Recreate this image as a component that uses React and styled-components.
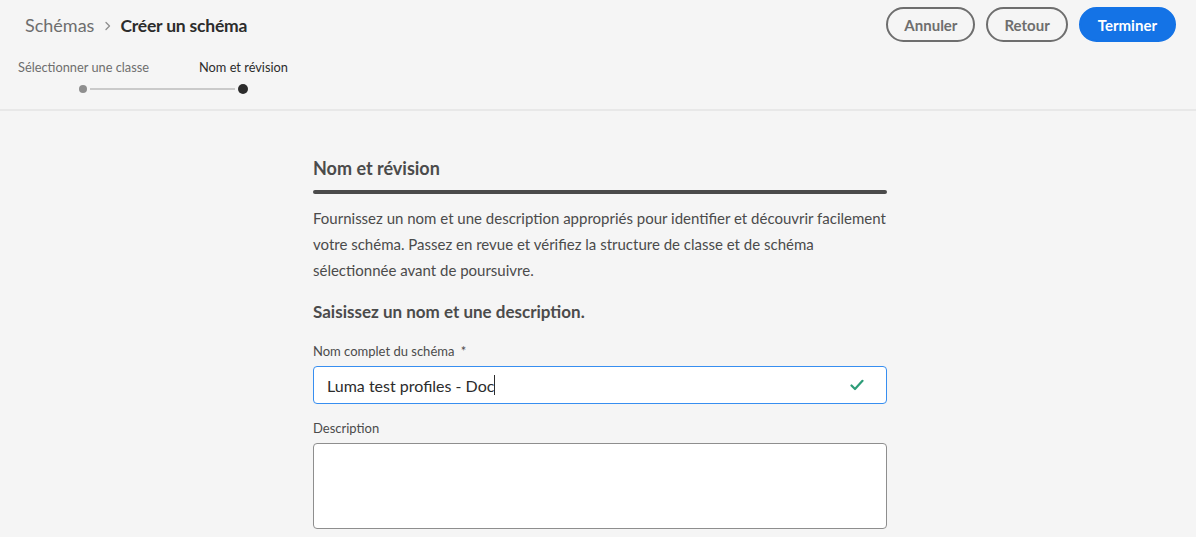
import styled, { createGlobalStyle } from "styled-components";

const GlobalStyle = createGlobalStyle`
  html, body {
    margin: 0;
    padding: 0;
    background: #f5f5f5;
    font-family: Lato, "Noto Sans", sans-serif;
    color: #4b4b4b;
  }
`;

function Stepper() {
  return (
    <Steps>
      <StepLabels>
        <StepLabel>Sélectionner une classe</StepLabel>
        <StepLabel $active>Nom et révision</StepLabel>
      </StepLabels>
      <Track>
        <Dot />
        <TrackLine />
        <Dot $active />
      </Track>
    </Steps>
  );
}

function CheckIcon() {
  return (
    <svg width="14" height="12" viewBox="0 0 14 12">
      <path d="M1.5 6.5 L5 10 L12.5 1.8" fill="none" stroke="#2d9d78" strokeWidth="2.2" strokeLinecap="round" strokeLinejoin="round" />
    </svg>
  );
}

export default function App() {
  return (
    <Page>
      <GlobalStyle />
      <Header>
        <HeaderLeft>
          <Breadcrumbs>
            <Crumb>Schémas</Crumb>
            <Chevron>
              <svg width="8" height="10" viewBox="0 0 8 10">
                <path d="M2 1.5 L5.5 5 L2 8.5" fill="none" stroke="#8e8e8e" strokeWidth="1.3" strokeLinecap="round" strokeLinejoin="round" />
              </svg>
            </Chevron>
            <CurrentCrumb>Créer un schéma</CurrentCrumb>
          </Breadcrumbs>
          <Stepper />
        </HeaderLeft>
        <Actions>
          <Button>Annuler</Button>
          <Button>Retour</Button>
          <Button $primary>Terminer</Button>
        </Actions>
      </Header>
      <Content>
        <Form>
          <SectionTitle>Nom et révision</SectionTitle>
          <TitleBar />
          <Intro>
            Fournissez un nom et une description appropriés pour identifier et découvrir facilement
            votre schéma. Passez en revue et vérifiez la structure de classe et de schéma
            sélectionnée avant de poursuivre.
          </Intro>
          <SubTitle>Saisissez un nom et une description.</SubTitle>
          <Field>
            <Label>Nom complet du schéma <Required>*</Required></Label>
            <InputWrap>
              <TextValue>Luma test profiles - Doc<Caret /></TextValue>
              <CheckIcon />
            </InputWrap>
          </Field>
          <Field $gap={15}>
            <Label>Description</Label>
            <TextArea />
          </Field>
        </Form>
      </Content>
    </Page>
  );
}

const Page = styled.div`
  width: 1196px;
  height: 537px;
  overflow: hidden;
  background: #f5f5f5;
`;

const Header = styled.header`
  display: flex;
  justify-content: space-between;
  align-items: flex-start;
  border-bottom: 2px solid #e8e8e8;
  box-sizing: border-box;
  height: 111px;
`;

const HeaderLeft = styled.div`
  display: flex;
  flex-direction: column;
  padding: 13px 0 0 18px;
`;

const Breadcrumbs = styled.div`
  display: flex;
  align-items: center;
  padding-left: 7px;
  height: 24px;
`;

const Crumb = styled.span`
  font-size: 18px;
  color: #6e6e6e;
`;

const Chevron = styled.span`
  display: flex;
  margin: 2px 8px 0 10px;
`;

const CurrentCrumb = styled.span`
  font-size: 17.5px;
  font-weight: 700;
  color: #2c2c2c;
  letter-spacing: -0.2px;
`;

const Steps = styled.div`
  display: flex;
  flex-direction: column;
  margin-top: 22px;
`;

const StepLabels = styled.div`
  display: flex;
  gap: 50px;
`;

const StepLabel = styled.span`
  font-size: 12.8px;
  color: ${(p) => (p.$active ? "#2c2c2c" : "#6e6e6e")};
`;

const Track = styled.div`
  display: flex;
  align-items: center;
  margin: 9px 0 0 61px;
  width: 169px;
`;

const Dot = styled.span`
  width: ${(p) => (p.$active ? "10px" : "8px")};
  height: ${(p) => (p.$active ? "10px" : "8px")};
  border-radius: 50%;
  background: ${(p) => (p.$active ? "#2c2c2c" : "#8e8e8e")};
  flex-shrink: 0;
`;

const TrackLine = styled.span`
  flex: 1;
  height: 2px;
  background: #cacaca;
  margin: 0 3px;
`;

const Actions = styled.div`
  display: flex;
  gap: 11px;
  padding: 7px 20px 0 0;
`;

const Button = styled.button`
  height: 35px;
  padding: 0 ${(p) => (p.$primary ? "17px" : "16px")};
  border-radius: 18px;
  border: 2px solid ${(p) => (p.$primary ? "#1473e6" : "#6e6e6e")};
  background: ${(p) => (p.$primary ? "#1473e6" : "transparent")};
  color: ${(p) => (p.$primary ? "#ffffff" : "#6e6e6e")};
  font-family: Lato, "Noto Sans", sans-serif;
  font-size: 15px;
  font-weight: 700;
`;

const Content = styled.main`
  display: flex;
  justify-content: center;
  padding-left: 4px;
`;

const Form = styled.div`
  width: 574px;
  display: flex;
  flex-direction: column;
  padding-top: 45px;
`;

const SectionTitle = styled.h2`
  margin: 0;
  font-size: 18px;
  font-weight: 700;
  color: #4b4b4b;
  line-height: 24px;
`;

const TitleBar = styled.div`
  height: 4px;
  border-radius: 2px;
  background: #4b4b4b;
  margin-top: 10px;
`;

const Intro = styled.p`
  margin: 11px 0 0;
  font-size: 15px;
  line-height: 26px;
  color: #4b4b4b;
`;

const SubTitle = styled.h3`
  margin: 17px 0 0;
  font-size: 17px;
  font-weight: 700;
  color: #4b4b4b;
  line-height: 24px;
`;

const Field = styled.div`
  display: flex;
  flex-direction: column;
  margin-top: ${(p) => p.$gap || 18}px;
`;

const Label = styled.label`
  font-size: 13px;
  color: #4b4b4b;
  line-height: 18px;
  margin-bottom: 6px;
`;

const Required = styled.span`
  margin-left: 3px;
`;

const InputWrap = styled.div`
  height: 38px;
  box-sizing: border-box;
  border: 1px solid #378ef0;
  border-radius: 4px;
  background: #ffffff;
  display: flex;
  align-items: center;
  justify-content: space-between;
  padding: 0 22px 0 13px;
`;

const TextValue = styled.span`
  font-size: 16px;
  color: #2c2c2c;
  display: flex;
  align-items: center;
`;

const Caret = styled.span`
  width: 1px;
  height: 20px;
  background: #2c2c2c;
`;

const TextArea = styled.div`
  height: 86px;
  box-sizing: border-box;
  border: 1px solid #8e8e8e;
  border-radius: 4px;
  background: #ffffff;
`;
